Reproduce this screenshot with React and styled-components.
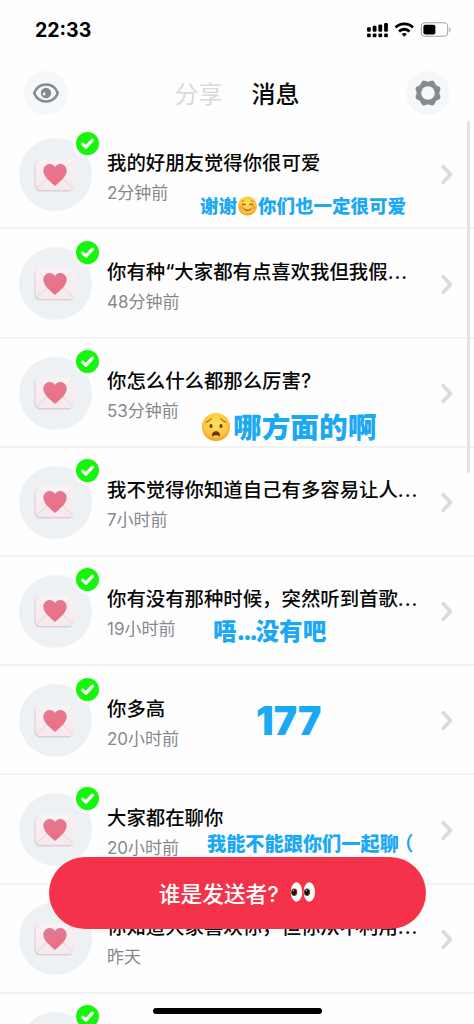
import React from 'react';
import styled, { createGlobalStyle } from 'styled-components';

const GlobalStyle = createGlobalStyle`
  * { box-sizing: border-box; }
  body {
    margin: 0;
    background: #fff;
    font-family: Inter, "Noto Sans CJK SC", sans-serif;
  }
`;

const Screen = styled.main`
  position: relative;
  display: flex;
  flex-direction: column;
  width: 474px;
  height: 1024px;
  overflow: hidden;
  background: #fefefe;
`;

const StatusBar = styled.div`
  display: flex;
  align-items: center;
  justify-content: space-between;
  flex: none;
  height: 60px;
  padding: 0 22px 0 35px;
`;

const Clock = styled.span`
  font-size: 19.5px;
  font-weight: 700;
  line-height: 24px;
  color: #000;
`;

const Header = styled.header`
  display: flex;
  align-items: center;
  justify-content: space-between;
  flex: none;
  height: 60.3px;
  padding: 6.5px 24px 0;
`;

const RoundButton = styled.button`
  display: flex;
  align-items: center;
  justify-content: center;
  width: 44px;
  height: 44px;
  padding: 0;
  border: 0;
  border-radius: 50%;
  background: #f5f7f9;
`;

const Tabs = styled.nav`
  display: flex;
  gap: 29px;
  padding-top: 3px;
`;

const Tab = styled.span`
  font-size: 24px;
  line-height: 32px;
  font-weight: ${(p) => (p.$active ? 500 : 400)};
  color: ${(p) => (p.$active ? '#0a0a0a' : '#d9dadc')};
`;

const List = styled.div`
  flex: none;
`;

const Row = styled.div`
  position: relative;
  display: flex;
  align-items: center;
  height: 109.2px;
  padding: 0 21px 0 19px;
  border-bottom: 2px solid #f2f2f3;
`;

const Avatar = styled.div`
  position: relative;
  display: flex;
  align-items: center;
  justify-content: center;
  flex: none;
  width: 73px;
  height: 73px;
  margin-top: 1.5px;
  padding-right: 1px;
  border-radius: 50%;
  background: #edf1f4;
`;

const Badge = styled.span`
  position: absolute;
  top: -9.5px;
  right: -10px;
  display: flex;
  width: 29px;
  height: 29px;
  border: 3px solid #fefefe;
  border-radius: 50%;
  background: #16f50c;
`;

const Info = styled.div`
  flex: 1;
  min-width: 0;
  padding: 8.5px 0 0 15px;
`;

const Title = styled.div`
  font-size: 19.4px;
  font-weight: 500;
  line-height: 28px;
  white-space: nowrap;
  color: #070707;
`;

const Dots = styled.span`
  letter-spacing: ${(p) => p.$spacing}px;
`;

const Time = styled.div`
  margin-top: 2px;
  font-size: 17px;
  line-height: 29px;
  white-space: nowrap;
  color: #85888f;
`;

// bold reply laid over the row
const Answer = styled.div`
  position: absolute;
  left: ${(p) => p.$x}px;
  top: ${(p) => p.$y}px;
  display: flex;
  align-items: center;
  height: 40px;
  font-size: ${(p) => p.$size}px;
  font-weight: 900;
  line-height: 40px;
  white-space: nowrap;
  color: #1ba8f5;
`;

const Paren = styled.span`
  margin-left: 5px;
  font-weight: 700;
  font-feature-settings: "halt";
`;

const Cta = styled.button`
  position: absolute;
  left: 49px;
  top: 857px;
  display: flex;
  align-items: center;
  justify-content: center;
  gap: 11px;
  width: 376.5px;
  height: 72px;
  padding: 0 0 2px;
  border: 0;
  border-radius: 36px;
  background: #f4334a;
  color: #fff;
  font-family: inherit;
  font-size: 21.7px;
  font-weight: 500;
`;

const Scrollbar = styled.div`
  position: absolute;
  left: 467px;
  top: 121px;
  width: 3px;
  height: 352px;
  border-radius: 2px;
  background: #e3e3e4;
`;

const HomeBar = styled.div`
  position: absolute;
  left: 153px;
  top: 1008px;
  width: 169px;
  height: 6px;
  border-radius: 3px;
  background: #000;
`;

function StatusIcons() {
  return (
    <svg width="86" height="18" viewBox="0 0 86 18">
      <g>
        {[0, 1, 2, 3].map((i) => (
          <g key={i}>
            <rect x={1 + i * 5.7} y={6.2 - i * 1.4} width="3.8" height={4.5 + i * 1.4} rx="1.2" />
            <rect x={1 + i * 5.7} y="12.4" width="3.8" height="3.8" rx="1.2" />
          </g>
        ))}
      </g>
      <g fill="none" stroke="#000" strokeWidth="2.8">
        <path d="M29.6 6.4a12.3 12.3 0 0 1 17.4 0" />
        <path d="M33 10.4a7.6 7.6 0 0 1 10.6 0" />
      </g>
      <path d="M35.7 13a4 4 0 0 1 5.2 0l-2.6 2.7z" />
      <rect x="55.3" y="1.8" width="26.4" height="13.4" rx="3.8" fill="none" stroke="#a3a3a3" strokeWidth="1.1" />
      <rect x="57.4" y="3.8" width="12" height="9.6" rx="1.8" />
      <path d="M83.4 6.5v4.2c1.5-.5 1.5-3.7 0-4.2z" fill="#999" />
    </svg>
  );
}

function EyeIcon() {
  return (
    <svg width="28" height="22" viewBox="0 0 28 22">
      <path
        d="M2.2 11C4.2 5.8 8.5 2.5 14 2.5S23.8 5.8 25.8 11C23.8 16.2 19.5 19.5 14 19.5S4.2 16.2 2.2 11z"
        fill="none"
        stroke="#868b92"
        strokeWidth="2.5"
        strokeLinejoin="round"
      />
      <circle cx="14" cy="11" r="5.2" fill="#868b92" />
      <circle cx="12.1" cy="12" r="1.4" fill="#f5f7f9" />
    </svg>
  );
}

// eight soft teeth around a ring
const gearPoints = Array.from({ length: 96 }, (_, i) => {
  const a = (i / 96) * Math.PI * 2;
  const r = 12.3 - 0.95 * Math.cos(a * 8);
  return `${(15 + r * Math.cos(a)).toFixed(2)},${(15 + r * Math.sin(a)).toFixed(2)}`;
}).join(' ');

function GearIcon() {
  return (
    <svg width="30" height="30" viewBox="0 0 30 30">
      <polygon points={gearPoints} fill="#868b92" />
      <circle cx="15" cy="15" r="6.8" fill="#f5f7f9" />
    </svg>
  );
}

function Letter() {
  return (
    <svg width="42" height="36" viewBox="0 0 42 36">
      <defs>
        <linearGradient id="paper" x1="0" y1="0" x2="0" y2="1">
          <stop offset="0" stopColor="#f8f1f3" />
          <stop offset="1" stopColor="#f6e9ed" />
        </linearGradient>
        <linearGradient id="heart" x1="0" y1="0" x2="0.3" y2="1">
          <stop offset="0" stopColor="#e47a93" />
          <stop offset="1" stopColor="#ec6f82" />
        </linearGradient>
      </defs>
      <rect x="0.5" y="2.8" width="39" height="31.7" rx="5.5" fill="#dbd0d5" />
      <rect x="1.5" y="2" width="39" height="31" rx="5.5" fill="url(#paper)" />
      <path d="M3 31l13-12M39 31L26 19" fill="none" stroke="#eadde2" strokeWidth="1.2" />
      <path d="M3 4l14 14q4 3 8 0L39 4" fill="#f9f3f5" stroke="#eadfe3" strokeWidth="1" />
      <path
        d="M21 28.6C16 24.5 9.7 19.5 9.7 13.6c0-6.5 8-8.7 11.3-3.2 3.3-5.5 11.3-3.3 11.3 3.2 0 5.9-6.3 10.900-11.3 15z"
        fill="url(#heart)"
        stroke="#d4708a"
        strokeWidth="0.6"
      />
    </svg>
  );
}

function Check() {
  return (
    <svg width="23" height="23" viewBox="0 0 23 23">
      <path d="M6.8 12.2l3.2 3 6.4-7" fill="none" stroke="#fff" strokeWidth="3.2" strokeLinecap="round" strokeLinejoin="round" />
    </svg>
  );
}

const ChevronSvg = styled.svg`
  flex: none;
  margin-top: 2px;
`;

function Chevron() {
  return (
    <ChevronSvg width="12" height="21" viewBox="0 0 12 21">
      <path d="M2.3 2.7l7.2 7.8-7.2 7.8" fill="none" stroke="#dadbde" strokeWidth="3.7" strokeLinecap="round" strokeLinejoin="round" />
    </ChevronSvg>
  );
}

function FaceGradient({ id }) {
  return (
    <radialGradient id={id} cx="0.5" cy="0.4" r="0.6">
      <stop offset="0" stopColor="#ffe262" />
      <stop offset="0.7" stopColor="#fdc63c" />
      <stop offset="1" stopColor="#eda027" />
    </radialGradient>
  );
}

function SmileFace() {
  return (
    <svg width="21" height="20" viewBox="0 0 21 20">
      <defs><FaceGradient id="smile" /></defs>
      <circle cx="10.5" cy="10" r="9.5" fill="url(#smile)" />
      <ellipse cx="4.5" cy="11.5" rx="2.3" ry="1.8" fill="#f78a4c" opacity="0.6" />
      <ellipse cx="16.5" cy="11.5" rx="2.3" ry="1.8" fill="#f78a4c" opacity="0.6" />
      <g fill="none" stroke="#8a5420" strokeWidth="1.1" strokeLinecap="round">
        <path d="M5.2 8.9q1.6-1.9 3.2 0M12.6 8.9q1.6-1.9 3.2 0M7 12.800q3.5 3.2 7 0" />
        <path d="M5 5.6l1.5-1M16 5.6l-1.500-1" strokeWidth="0.7" />
      </g>
    </svg>
  );
}

function WorriedFace() {
  return (
    <svg width="32" height="30" viewBox="0 0 32 30">
      <defs><FaceGradient id="worried" /></defs>
      <circle cx="15" cy="14" r="14" fill="url(#worried)" />
      <path d="M5 9.2q3.6-.8 5.2-3.6M25 9.2q-3.6-.8-5.2-3.6" fill="none" stroke="#a0671b" strokeWidth="1.1" strokeLinecap="round" />
      <ellipse cx="10" cy="13" rx="1.5" ry="1.9" fill="#603712" />
      <ellipse cx="20" cy="13" rx="1.5" ry="1.9" fill="#603712" />
      <path d="M11 22.700c-.6-6 8.600-6 8 0-.3 1-.9.400-1.900 0-1.500-.6-2.700-.6-4.200 0-1 .4-1.600 1-1.900 0z" fill="#653613" />
    </svg>
  );
}

function Eyes() {
  return (
    <svg width="26" height="22" viewBox="0 0 26 22">
      <g fill="#fff">
        <ellipse cx="6.5" cy="11" rx="5.7" ry="9.7" />
        <ellipse cx="19.3" cy="11" rx="5.7" ry="9.7" />
      </g>
      <g fill="#653a1c">
        <ellipse cx="4.2" cy="11.3" rx="3.1" ry="3.7" />
        <ellipse cx="17" cy="11.3" rx="3.1" ry="3.7" />
      </g>
      <g fill="#130c08">
        <ellipse cx="4" cy="11.3" rx="2" ry="2.7" />
        <ellipse cx="16.8" cy="11.3" rx="2" ry="2.7" />
      </g>
      <circle cx="3.5" cy="9.6" r="0.7" fill="#fff" />
      <circle cx="16.3" cy="9.6" r="0.7" fill="#fff" />
    </svg>
  );
}

const messages = [
  {
    title: '我的好朋友觉得你很可爱',
    time: '2分钟前',
    answer: { x: 200, y: 65.5, size: 18.5, body: <>谢谢<SmileFace />你们也一定很可爱</> },
  },
  { title: '你有种“大家都有点喜欢我但我假', more: true, time: '48分钟前' },
  {
    title: '你怎么什么都那么厉害?',
    time: '53分钟前',
    answer: { x: 201, y: 69.5, size: 28.7, body: <><WorriedFace />哪方面的啊</> },
  },
  { title: '我不觉得你知道自己有多容易让人', more: true, time: '7小时前' },
  {
    title: '你有没有那种时候，突然听到首歌',
    more: true,
    time: '19小时前',
    answer: { x: 213, y: 55, size: 23.6, body: <>唔<Dots $spacing={-2.5}>...</Dots>没有吧</> },
  },
  {
    title: '你多高',
    time: '20小时前',
    answer: { x: 256, y: 34.5, size: 39.3, body: '177' },
  },
  {
    title: '大家都在聊你',
    time: '20小时前',
    answer: { x: 207, y: 48.5, size: 19.2, body: <>我能不能跟你们一起聊<Paren>（</Paren></> },
  },
  { title: '你知道大家喜欢你，但你从不利用', more: true, time: '昨天' },
  { title: '', time: '' },
];

function Message({ title, more, time, answer }) {
  return (
    <Row>
      <Avatar>
        <Letter />
        <Badge><Check /></Badge>
      </Avatar>
      <Info>
        <Title>
          {title}
          {more && <Dots $spacing={0.9}>...</Dots>}
        </Title>
        <Time>{time}</Time>
      </Info>
      <Chevron />
      {answer && (
        <Answer $x={answer.x} $y={answer.y} $size={answer.size}>{answer.body}</Answer>
      )}
    </Row>
  );
}

function App() {
  return (
    <>
      <GlobalStyle />
      <Screen>
        <StatusBar>
          <Clock>22:33</Clock>
          <StatusIcons />
        </StatusBar>
        <Header>
          <RoundButton><EyeIcon /></RoundButton>
          <Tabs>
            <Tab>分享</Tab>
            <Tab $active>消息</Tab>
          </Tabs>
          <RoundButton><GearIcon /></RoundButton>
        </Header>
        <List>
          {messages.map((m, i) => (
            <Message key={i} {...m} />
          ))}
        </List>
        <Scrollbar />
        <Cta>
          谁是发送者?
          <Eyes />
        </Cta>
        <HomeBar />
      </Screen>
    </>
  );
}

export default App;
